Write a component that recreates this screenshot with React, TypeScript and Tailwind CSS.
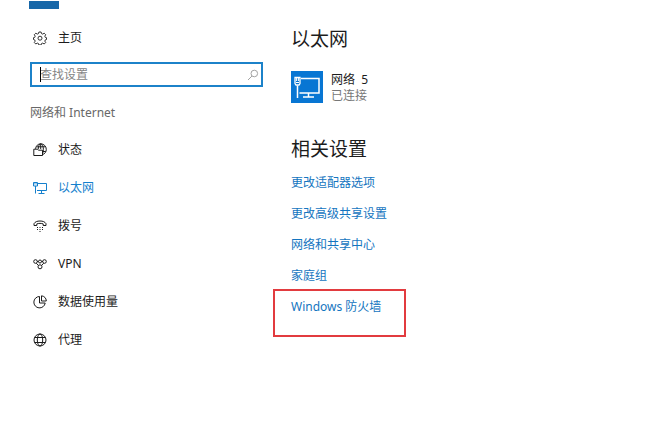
import type { ReactNode } from "react"
import clsx from "clsx"

const Icon = ({ children }: { children: ReactNode }) => (
  <svg
    viewBox="0 0 14 14"
    className="h-3.5 w-3.5 shrink-0"
    fill="none"
    stroke="currentColor"
    strokeWidth="1"
    aria-hidden="true"
  >
    {children}
  </svg>
)

const GearIcon = () => (
  <Icon>
    <path
      d="M5.9 1h2.2l.4 1.6 1.2.5 1.5-.9 1.5 1.5-.9 1.5.5 1.2 1.2.3v1.8l-1.2.4-.5 1.2.9 1.4-1.5 1.5-1.5-.9-1.2.5-.4 1.4H5.9l-.4-1.4-1.2-.5-1.5.9-1.5-1.5.9-1.4-.5-1.2L.5 8.5V6.7l1.2-.3.5-1.2-.9-1.5 1.5-1.5 1.5.9 1.2-.5z"
      strokeWidth="0.9"
    />
    <circle cx="7" cy="7.2" r="2" strokeWidth="0.9" />
  </Icon>
)

const StatusIcon = () => (
  <Icon>
    <path d="M2.5 5.8C2.9 2.9 5 .8 7.7.8c3.1 0 5.6 2.5 5.6 5.6 0 2.6-1.5 4.500-3.800 5.200" />
    <path d="M5.2 6C5.4 3 6.3.8 7.7.8s2.7 2.4 2.7 5.6c0 1.700-.3 3.200-.9 4.200M3.500 3.800h9M9.500 8.500h3.300M7.700 1v5" />
    <path d="M.8 6.2h3.7l.9 1h4.100v5.300H.8z" />
  </Icon>
)

const EthernetIcon = () => (
  <Icon>
    <path d="M5 2.5h8.5v7H4M8.5 9.5v3M5.5 12.5h6" />
    <path d="M.5 1.5h4V5h-4zM2.500 5v7.500" />
    <path d="M1.800 1.500v2M3.200 1.500v2" strokeWidth="0.7" />
  </Icon>
)

const DialUpIcon = () => (
  <Icon>
    <path d="M1 6.5V4.7C2 2.8 4.2 2 7 2s5 .8 6 2.7v1.8h-2.800V4.900c-1.700-.7-4.700-.7-6.400 0v1.600z" />
    <path d="M4 8.500h1M6.500 8.500h1M9 8.500h1M4 10.500h1M6.500 10.500h1M9 10.500h1M6.500 12.500h1" />
  </Icon>
)

const VpnIcon = () => (
  <Icon>
    <circle cx="2.5" cy="4.5" r="1.8" />
    <circle cx="7" cy="4.5" r="1.5" />
    <circle cx="11.5" cy="4.5" r="1.8" />
    <circle cx="7" cy="9.8" r="2" />
    <path d="M4 4.5h1.5M8.500 4.500H10M3.300 6.200l2.200 2.400M10.700 6.200L8.500 8.600" />
  </Icon>
)

const DataUsageIcon = () => (
  <Icon>
    <path d="M6.500 1.500a5.700 5.700 0 1 0 5.700 6.500H6.500z" />
    <path d="M8.500.8V6h4.800C13.300 3.200 11.300 1.100 8.500.8z" />
  </Icon>
)

const ProxyIcon = () => (
  <Icon>
    <circle cx="7" cy="7" r="6" />
    <ellipse cx="7" cy="7" rx="2.7" ry="6" />
    <path d="M1.500 4.500h11M1.500 9.500h11" />
  </Icon>
)

const navItems = [
  { label: "状态", icon: <StatusIcon /> },
  { label: "以太网", icon: <EthernetIcon />, active: true },
  { label: "拨号", icon: <DialUpIcon /> },
  { label: "VPN", icon: <VpnIcon /> },
  { label: "数据使用量", icon: <DataUsageIcon /> },
  { label: "代理", icon: <ProxyIcon /> },
]

const relatedLinks = [
  { label: "更改适配器选项" },
  { label: "更改高级共享设置" },
  { label: "网络和共享中心" },
  { label: "家庭组" },
  { label: "Windows 防火墙", highlighted: true },
]

const NavLink = ({
  label,
  icon,
  active,
}: {
  label: string
  icon: ReactNode
  active?: boolean
}) => (
  <a
    href="#"
    aria-current={active ? "page" : undefined}
    className={clsx(
      "flex h-[38px] items-center gap-[11px] pl-[3px]",
      active ? "text-[#1580cd]" : "text-[#1c1c1c]"
    )}
  >
    {icon}
    <span>{label}</span>
  </a>
)

const SearchBox = () => (
  <div className="relative mt-[5px]">
    <input
      type="search"
      aria-label="查找设置"
      placeholder="查找设置"
      className="block h-[25px] w-full appearance-none border-2 border-[#1c82c9] bg-white pr-7 pl-2 text-[12px] outline-none placeholder:text-[#858585]"
    />
    <span className="absolute top-[5px] left-[10px] h-[15px] w-px bg-black" />
    <svg
      viewBox="0 0 12 12"
      className="absolute top-[7px] right-1 h-3 w-3 text-[#a3a3a3]"
      fill="none"
      stroke="currentColor"
      aria-hidden="true"
    >
      <circle cx="7.3" cy="4.5" r="3.3" />
      <path d="M5 7L1 11" />
    </svg>
  </div>
)

const NetworkTile = () => (
  <svg
    viewBox="0 0 32 32"
    className="h-8 w-8 shrink-0 bg-[#0876d3]"
    fill="none"
    stroke="#fff"
    strokeWidth="1.5"
    aria-hidden="true"
  >
    <path d="M10 7.5h18V22H8.5M17.5 22v4M12 26h11" />
    <path d="M6.5 14.5V27" />
    <path d="M4 6.5h5v6L8 14H5l-1-1.5z" strokeWidth="1.3" />
    <path d="M5.6 7v3M7.4 7v3M5 11.5h3" strokeWidth="1" />
  </svg>
)

export default function App() {
  return (
    <div className="flex min-h-screen gap-7 bg-white pl-[30px] font-['Noto_Sans','Noto_Sans_CJK_SC',sans-serif] text-[12px] leading-4 text-[#1c1c1c]">
      <aside className="w-[233px] shrink-0 pt-px">
        <div className="-ml-px h-2 w-[30px] bg-[#1767a8]" />
        <nav className="mt-[10px]">
          <NavLink label="主页" icon={<GearIcon />} />
          <SearchBox />
          <h2 className="mt-[18px] mb-[10px] text-[#686868]">网络和 Internet</h2>
          <ul>
            {navItems.map((item) => (
              <li key={item.label}>
                <NavLink {...item} />
              </li>
            ))}
          </ul>
        </nav>
      </aside>

      <main className="min-w-0 flex-1 pt-[27px]">
        <h1 className="text-[19px] leading-6">以太网</h1>
        <a href="#" className="mt-5 flex items-start gap-2">
          <NetworkTile />
          <span className="pt-px">
            <span className="block whitespace-pre">网络  5</span>
            <span className="block text-[#777777]">已连接</span>
          </span>
        </a>

        <h2 className="mt-[33px] text-[19px] leading-6">相关设置</h2>
        <ul className="mt-[6px]">
          {relatedLinks.map(({ label, highlighted }) => (
            <li key={label} className="relative flex h-[31px] items-center">
              <a href="#" className="text-[#1475c0]">
                {label}
              </a>
              {highlighted && (
                <span className="pointer-events-none absolute -top-[2px] -left-[18px] h-12 w-[133px] border-2 border-[#e23b3f]" />
              )}
            </li>
          ))}
        </ul>
      </main>
    </div>
  )
}
